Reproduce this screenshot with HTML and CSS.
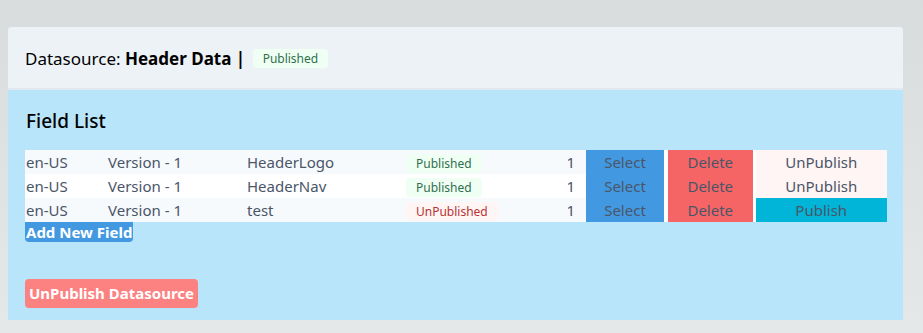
FILE: index.html
```html
<!DOCTYPE html>
<html lang="en">
<head>
    <meta charset="UTF-8">
    <meta name="viewport" content="width=device-width, initial-scale=1.0">
    <title>Datasource - Header Data</title>
    <link rel="stylesheet" href="styles.css">
</head>
<body>
    <div class="card">
        <div class="card-header">
            <h2 class="title">Datasource: <strong>Header Data |</strong> <span class="badge badge-green">Published</span></h2>
        </div>
        <div class="card-body">
            <h3 class="section-title">Field List</h3>
            <table class="field-table">
                <colgroup>
                    <col class="c-lang">
                    <col class="c-version">
                    <col class="c-name">
                    <col class="c-status">
                    <col class="c-count">
                    <col class="c-select">
                    <col class="c-delete">
                    <col class="c-publish">
                </colgroup>
                <tbody>
                    <tr>
                        <td>en-US</td>
                        <td>Version - 1</td>
                        <td>HeaderLogo</td>
                        <td><span class="badge badge-green">Published</span></td>
                        <td class="num">1</td>
                        <td class="act act-select">Select</td>
                        <td class="act act-delete">Delete</td>
                        <td class="act act-unpublish">UnPublish</td>
                    </tr>
                    <tr>
                        <td>en-US</td>
                        <td>Version - 1</td>
                        <td>HeaderNav</td>
                        <td><span class="badge badge-green">Published</span></td>
                        <td class="num">1</td>
                        <td class="act act-select">Select</td>
                        <td class="act act-delete">Delete</td>
                        <td class="act act-unpublish">UnPublish</td>
                    </tr>
                    <tr>
                        <td>en-US</td>
                        <td>Version - 1</td>
                        <td>test</td>
                        <td><span class="badge badge-red">UnPublished</span></td>
                        <td class="num">1</td>
                        <td class="act act-select">Select</td>
                        <td class="act act-delete">Delete</td>
                        <td class="act act-publish">Publish</td>
                    </tr>
                </tbody>
            </table>
            <button type="button" class="btn btn-add">Add New Field</button>
            <div class="footer-actions">
                <button type="button" class="btn btn-unpublish">UnPublish Datasource</button>
            </div>
        </div>
    </div>
</body>
</html>
```

FILE: styles.css
```css
body {
    font-family: "Segoe UI", "Noto Sans", sans-serif;
    background: linear-gradient(#d9dcdc, #e5e8e8);
    margin: 0;
    padding: 27px 20px 0 8px;
    min-height: 333px;
    box-sizing: border-box;
    color: #000;
}

.card {
    border-radius: 3px 3px 0 0;
    overflow: hidden;
}

.card-header {
    background-color: #edf2f7;
    border-bottom: 2px solid #e2e8f0;
    padding: 18px 17px 15px;
}

.title {
    margin: 0;
    font-size: 17px;
    font-weight: 400;
    line-height: 28px;
}

.title strong {
    font-weight: 700;
}

.badge {
    display: inline-block;
    font-size: 12px;
    line-height: 19px;
    padding: 0 10px;
    border-radius: 4px;
    vertical-align: middle;
}

.title .badge {
    margin-left: 3px;
    position: relative;
    top: -2px;
}

.badge-green {
    background-color: #f0fff4;
    color: #2f6f4e;
}

.badge-red {
    background-color: #fff5f5;
    color: #b83232;
}

.card-body {
    background-color: #b9e5fb;
    padding: 16px 17px 12px;
}

.section-title {
    margin: 0 0 14px 1px;
    font-size: 19px;
    font-weight: 500;
    line-height: 30px;
}

.field-table {
    width: 862px;
    border-collapse: collapse;
    table-layout: fixed;
    color: #4a5568;
    font-size: 15px;
}

.field-table td {
    padding: 0 1px;
    height: 24px;
    line-height: 24px;
    white-space: nowrap;
}

.field-table tr:nth-child(odd) {
    background-color: #f7fafc;
}

.field-table tr:nth-child(even) {
    background-color: #fff;
}

.c-lang { width: 82px; }
.c-version { width: 139px; }
.c-name { width: 159px; }
.c-status { width: 115px; }
.c-count { width: 66px; }
.c-select { width: 80px; }
.c-delete { width: 88px; }
.c-publish { width: 133px; }

.num {
    text-align: right;
}

.field-table td.num {
    padding-right: 11px;
}

.act {
    text-align: center;
}

.act-select {
    background-color: #4299e1;
}

.act-delete {
    background-color: #f56565;
    border-left: 4px solid #fff;
}

.act-unpublish {
    background-color: #fff5f5;
    border-left: 3px solid #fff;
}

.act-publish {
    background-color: #00b5d8;
    border-left: 3px solid #fff;
}

.btn {
    font-family: inherit;
    border: none;
    color: #fff;
    font-weight: 700;
    cursor: pointer;
}

.btn-add {
    display: block;
    background-color: #4299e1;
    font-size: 15px;
    line-height: 20px;
    padding: 0 1px;
    border-radius: 0 0 4px 4px;
}

.footer-actions {
    margin-top: 37px;
}

.btn-unpublish {
    background-color: #fc8181;
    font-size: 15px;
    line-height: 21px;
    padding: 4px 4px;
    border-radius: 4px;
}
```
